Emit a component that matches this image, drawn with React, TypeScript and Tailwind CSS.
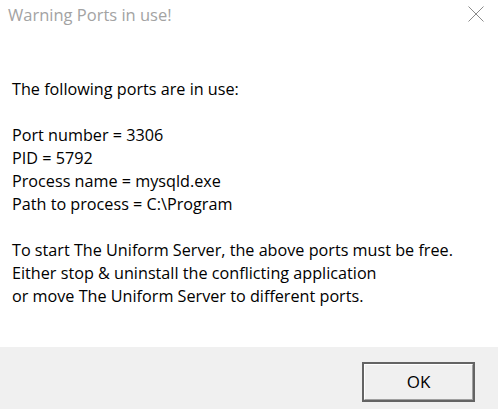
export default function App() {
  const lines = [
    "The following ports are in use:",
    "",
    "Port number = 3306",
    "PID = 5792",
    "Process name = mysqld.exe",
    "Path to process = C:\\Program",
    "",
    "To start The Uniform Server, the above ports must be free.",
    "Either stop & uninstall the conflicting application",
    "or move The Uniform Server to different ports.",
  ];

  return (
    <div
      className="flex flex-col w-[498px] h-[409px] bg-white overflow-hidden"
      style={{ fontFamily: '"Open Sans", "Noto Sans", sans-serif' }}
    >
      {/* title bar */}
      <div className="flex items-start justify-between h-[30px] pl-[8px] pr-[14px] pt-[3px]">
        <span className="text-[16.5px] leading-[24px] text-[#a3a3a3]">Warning Ports in use!</span>
        <svg width="16" height="16" viewBox="0 0 16 16" className="mt-[3px]">
          <path d="M0.5 0.5L15.5 15.5M15.5 0.5L0.5 15.5" stroke="#8a8a8a" strokeWidth="1" fill="none" />
        </svg>
      </div>

      {/* message */}
      <div className="flex-1 pl-[12px] pt-[48px] text-[16.2px] leading-[23px] text-black">
        {lines.map((l, i) => (
          <div key={i} className="h-[23px] whitespace-pre">
            {l}
          </div>
        ))}
      </div>

      {/* footer */}
      <div className="flex justify-end h-[62px] bg-[#f0f0f0] pt-[15px] pr-[23px]">
        <button className="w-[113px] h-[40px] border-2 border-[#646464] bg-[#f0f0f0] text-[17px] text-black">
          <div className="w-full h-full flex items-center justify-center border-t border-l border-white border-r border-b border-r-[#a0a0a0] border-b-[#a0a0a0]">
            OK
          </div>
        </button>
      </div>
    </div>
  );
}
